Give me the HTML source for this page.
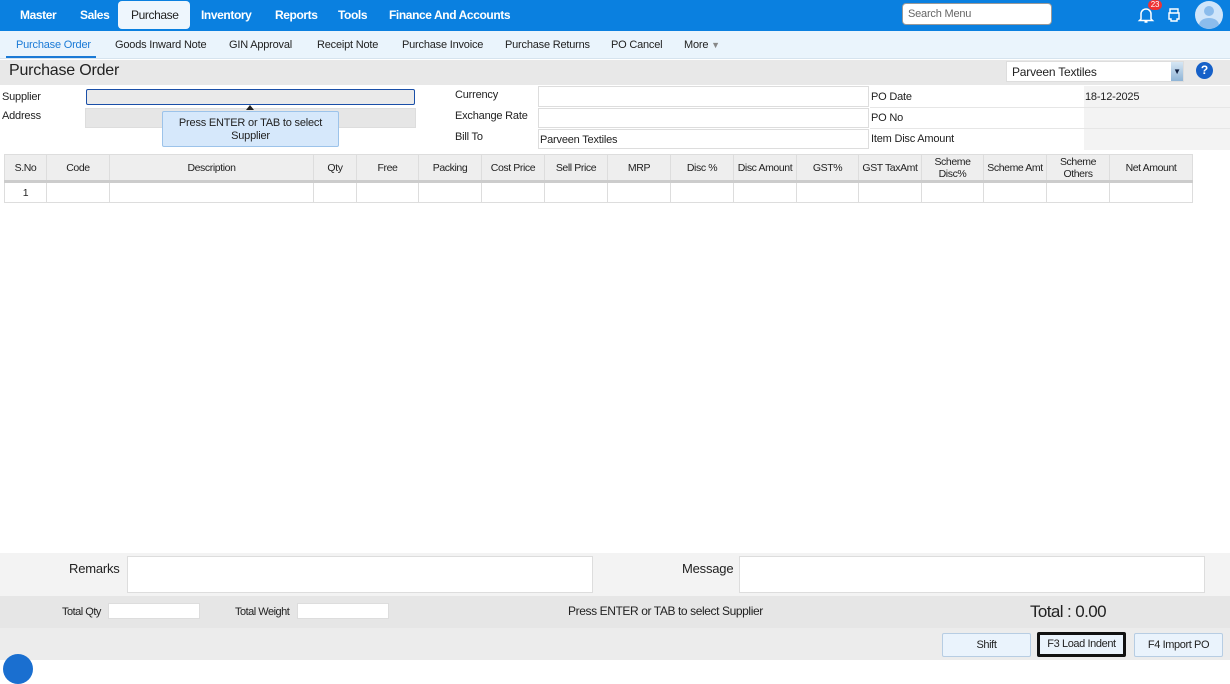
<!DOCTYPE html>
<html><head><meta charset="utf-8"><style>
*{box-sizing:border-box;margin:0;padding:0}
body{width:1230px;height:660px;overflow:hidden;background:#fff;font-family:"Liberation Sans",sans-serif;font-size:11px;color:#222;position:relative;letter-spacing:-0.2px}
.a{position:absolute}
.nav{left:0;top:0;width:1230px;height:31px;background:#0a80e0}
.nav span{position:absolute;top:8px;color:#fff;font-weight:bold;font-size:12px;letter-spacing:-0.4px}
.sub{left:0;top:31px;width:1230px;height:28px;background:#eaf4fc;border-bottom:1px solid #d6e3ee}
.sub span{position:absolute;top:8px;font-size:11px;color:#222}
.lbl{font-size:11px}
.box{background:#fff;border:1px solid #ddd}
table{border-collapse:collapse;position:absolute;left:4px;top:154px;table-layout:fixed}
td{border:1px solid #ddd;text-align:center;font-size:10.5px;padding:0;letter-spacing:-0.4px;white-space:nowrap}
thead td{background:#eee;height:27px;border-bottom:3px solid #ccc;line-height:12px}
tbody td{height:21px;background:#fff}
.btn{background:#eaf3fc;border:1px solid #b7cde3;border-radius:2px;text-align:center;font-size:11px;line-height:22px;letter-spacing:-0.4px}
</style></head><body>
<div class="a nav">
<span style="left:20px">Master</span><span style="left:80px">Sales</span>
<div class="a" style="left:118px;top:1px;width:72px;height:28px;background:#eef6fd;border-radius:4px"></div>
<span style="left:131px;color:#222;font-weight:normal">Purchase</span>
<span style="left:201px">Inventory</span><span style="left:275px">Reports</span><span style="left:338px">Tools</span><span style="left:389px">Finance And Accounts</span>
<div class="a" style="left:902px;top:3px;width:150px;height:22px;background:#fff;border-radius:4px;border:1px solid #999;color:#666;font-size:11px;padding:4px 5px;font-weight:normal">Search Menu</div>
<svg class="a" style="left:1136px;top:5px" width="20" height="20" viewBox="0 0 20 20"><path d="M5 14V9a5 5 0 0110 0v5l1.5 1.5h-13z M8.5 17h3" fill="none" stroke="#fff" stroke-width="1.5"/></svg>
<div class="a" style="left:1148px;top:0;width:14px;height:10px;background:#e33;border-radius:5px;color:#fff;font-size:8px;text-align:center;line-height:10px">23</div>
<svg class="a" style="left:1166px;top:7px" width="16" height="16" viewBox="0 0 16 16"><path d="M4 6V2h8v4M3 6h10v6h-2v2H5v-2H3z" fill="none" stroke="#fff" stroke-width="1.4"/></svg>
<div class="a" style="left:1195px;top:1px;width:28px;height:28px;border-radius:50%;background:#cfe5fa;overflow:hidden"><div class="a" style="left:9px;top:5px;width:10px;height:10px;border-radius:50%;background:#8bbcec"></div><div class="a" style="left:4px;top:17px;width:20px;height:14px;border-radius:50%;background:#8bbcec"></div></div>
</div>
<div class="a sub">
<span style="left:16px;color:#1a7ad6">Purchase Order</span>
<div class="a" style="left:6px;top:25px;width:90px;height:2px;background:#1a7ad6"></div>
<span style="left:115px">Goods Inward Note</span><span style="left:229px">GIN Approval</span><span style="left:317px">Receipt Note</span><span style="left:402px">Purchase Invoice</span><span style="left:505px">Purchase Returns</span><span style="left:611px">PO Cancel</span><span style="left:684px">More <span style="position:static;color:#888;font-size:9px">▼</span></span>
</div>
<div class="a" style="left:0;top:60px;width:1230px;height:25px;background:#e8e8e8"></div>
<div class="a" style="left:9px;top:62px;font-size:16px">Purchase Order</div>
<div class="a box" style="left:1006px;top:61px;width:178px;height:21px;font-size:12px;padding:3px 5px">Parveen Textiles</div>
<div class="a" style="left:1171px;top:62px;width:12px;height:19px;background:linear-gradient(#d6e6f4,#8fb4d6);color:#124;font-size:8px;text-align:center;line-height:19px">▼</div>
<div class="a" style="left:1196px;top:62px;width:17px;height:17px;border-radius:50%;background:#1560c8;color:#fff;font-weight:bold;font-size:12px;text-align:center;line-height:17px">?</div>
<div class="a lbl" style="left:2px;top:91px">Supplier</div>
<div class="a lbl" style="left:2px;top:110px">Address</div>
<div class="a" style="left:86px;top:89px;width:329px;height:16px;background:#eaeaea;border:1px solid #1a4fa8;border-radius:2px"></div>
<div class="a" style="left:85px;top:108px;width:331px;height:20px;background:#e6e6e6;border:1px solid #ddd"></div>
<div class="a" style="left:246px;top:105px;width:0;height:0;border-left:4px solid transparent;border-right:4px solid transparent;border-bottom:5px solid #222"></div>
<div class="a" style="left:162px;top:111px;width:177px;height:36px;background:#d6e8fb;border:1px solid #9cc3ea;border-radius:2px;text-align:center;font-size:11px;line-height:13px;padding-top:5px">Press ENTER or TAB to select<br>Supplier</div>
<div class="a lbl" style="left:455px;top:89px">Currency</div>
<div class="a lbl" style="left:455px;top:110px">Exchange Rate</div>
<div class="a lbl" style="left:455px;top:131px">Bill To</div>
<div class="a box" style="left:538px;top:86px;width:331px;height:21px"></div>
<div class="a box" style="left:538px;top:108px;width:331px;height:20px"></div>
<div class="a box" style="left:538px;top:129px;width:331px;height:20px;padding:4px 1px">Parveen Textiles</div>
<div class="a" style="left:870px;top:86px;width:360px;height:64px;background:#f3f3f3"></div>
<div class="a" style="left:870px;top:86px;width:214px;height:64px;background:#fff"></div>
<div class="a lbl" style="left:871px;top:91px">PO Date</div>
<div class="a lbl" style="left:1085px;top:91px">18-12-2025</div>
<div class="a lbl" style="left:871px;top:112px">PO No</div>
<div class="a lbl" style="left:871px;top:133px">Item Disc Amount</div>
<div class="a" style="left:870px;top:107px;width:360px;height:1px;background:#e6e6e6"></div>
<div class="a" style="left:870px;top:128px;width:360px;height:1px;background:#e6e6e6"></div>
<table style="width:1189px"><colgroup><col style="width:42px"><col style="width:63px"><col style="width:204px"><col style="width:43px"><col style="width:62px"><col style="width:63px"><col style="width:63px"><col style="width:63px"><col style="width:63px"><col style="width:63px"><col style="width:63px"><col style="width:62px"><col style="width:63px"><col style="width:62px"><col style="width:63px"><col style="width:63px"><col style="width:83px"></colgroup><thead><tr>
<td>S.No</td><td>Code</td><td>Description</td><td>Qty</td><td>Free</td><td>Packing</td><td>Cost Price</td><td>Sell Price</td><td>MRP</td><td>Disc %</td><td>Disc Amount</td><td>GST%</td><td>GST TaxAmt</td><td>Scheme<br>Disc%</td><td>Scheme Amt</td><td>Scheme<br>Others</td><td>Net Amount</td>
</tr></thead><tbody><tr><td>1</td><td></td><td></td><td></td><td></td><td></td><td></td><td></td><td></td><td></td><td></td><td></td><td></td><td></td><td></td><td></td><td></td></tr></tbody></table>
<div class="a" style="left:0;top:553px;width:1230px;height:43px;background:#f3f3f3"></div>
<div class="a" style="left:69px;top:561px;font-size:13px">Remarks</div>
<div class="a box" style="left:127px;top:556px;width:466px;height:37px"></div>
<div class="a" style="left:682px;top:561px;font-size:13px">Message</div>
<div class="a box" style="left:739px;top:556px;width:466px;height:37px"></div>
<div class="a" style="left:0;top:596px;width:1230px;height:32px;background:#e6e6e6"></div>
<div class="a lbl" style="left:62px;top:606px;letter-spacing:-0.5px">Total Qty</div>
<div class="a box" style="left:108px;top:603px;width:92px;height:16px"></div>
<div class="a lbl" style="left:235px;top:606px;letter-spacing:-0.5px">Total Weight</div>
<div class="a box" style="left:297px;top:603px;width:92px;height:16px"></div>
<div class="a" style="left:568px;top:604px;font-size:12px;letter-spacing:-0.4px">Press ENTER or TAB to select Supplier</div>
<div class="a" style="left:1030px;top:602px;font-size:17px;letter-spacing:-0.6px">Total : 0.00</div>
<div class="a" style="left:0;top:628px;width:1230px;height:32px;background:#ececec"></div>
<div class="a btn" style="left:942px;top:633px;width:89px;height:24px">Shift</div>
<div class="a btn" style="left:1037px;top:632px;width:89px;height:25px;border:3px solid #111;background:#eaf3fc;line-height:19px">F3 Load Indent</div>
<div class="a btn" style="left:1134px;top:633px;width:89px;height:24px">F4 Import PO</div>
<div class="a" style="left:3px;top:654px;width:30px;height:30px;border-radius:50%;background:#1a6fd0"></div>
</body></html>
